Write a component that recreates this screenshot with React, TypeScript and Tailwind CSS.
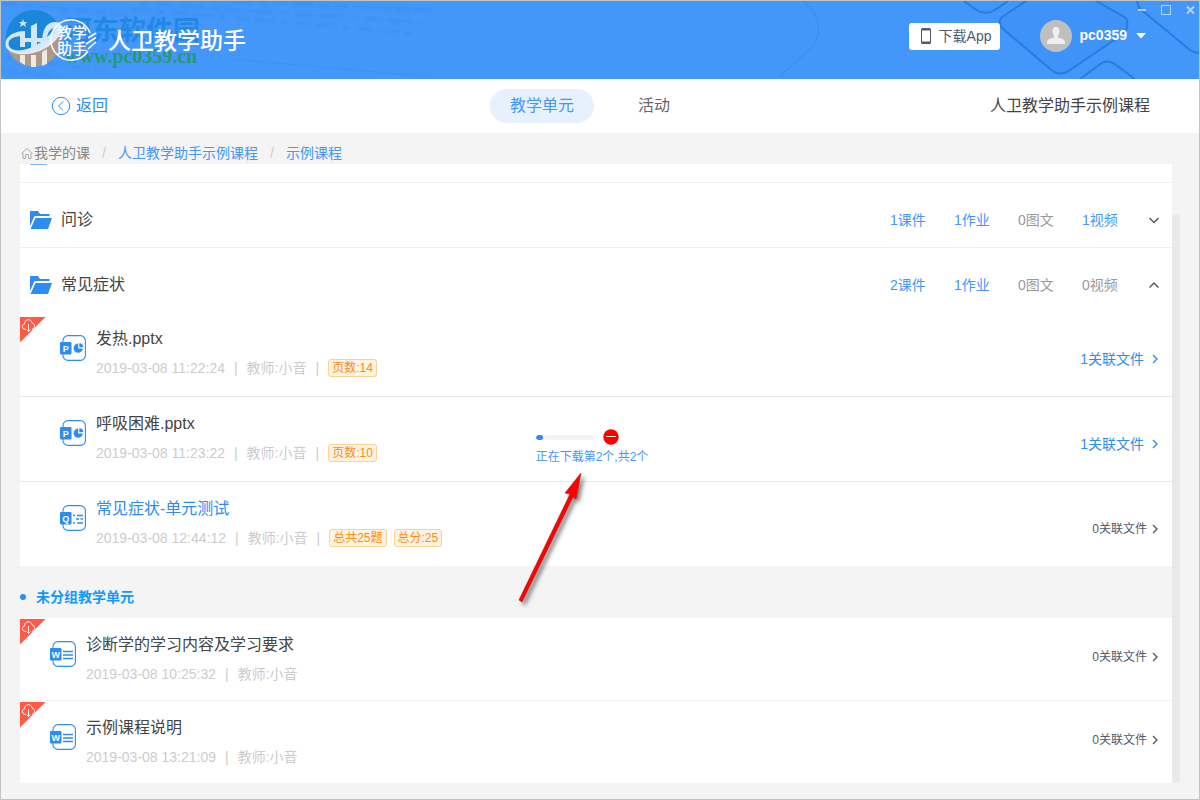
import type { ReactNode } from "react";

type UnitFile = {
  title: string;
  date: string;
  kind: "P" | "Q" | "W";
  related: number;
  tags?: string[];
  pending?: boolean;
  highlight?: boolean;
  downloading?: boolean;
};

type Folder = {
  name: string;
  counts: [number, string][];
  open: boolean;
};

const folders: Folder[] = [
  {
    name: "问诊",
    counts: [
      [1, "课件"],
      [1, "作业"],
      [0, "图文"],
      [1, "视频"],
    ],
    open: false,
  },
  {
    name: "常见症状",
    counts: [
      [2, "课件"],
      [1, "作业"],
      [0, "图文"],
      [0, "视频"],
    ],
    open: true,
  },
];

const groupedFiles: UnitFile[] = [
  {
    title: "发热.pptx",
    date: "2019-03-08 11:22:24",
    kind: "P",
    related: 1,
    tags: ["页数:14"],
    pending: true,
  },
  {
    title: "呼吸困难.pptx",
    date: "2019-03-08 11:23:22",
    kind: "P",
    related: 1,
    tags: ["页数:10"],
    downloading: true,
  },
  {
    title: "常见症状-单元测试",
    date: "2019-03-08 12:44:12",
    kind: "Q",
    related: 0,
    tags: ["总共25题", "总分:25"],
    highlight: true,
  },
];

const ungroupedFiles: UnitFile[] = [
  {
    title: "诊断学的学习内容及学习要求",
    date: "2019-03-08 10:25:32",
    kind: "W",
    related: 0,
    pending: true,
  },
  {
    title: "示例课程说明",
    date: "2019-03-08 13:21:09",
    kind: "W",
    related: 0,
    pending: true,
  },
];

function HeaderBackdrop() {
  return (
    <>
      <svg
        className="absolute left-0 top-0"
        width="500"
        height="78"
        fill="none"
        stroke="#2f7fe0"
        strokeWidth="3"
        opacity="0.22"
        aria-hidden="true"
      >
        <g className="blur-[1px]">
          <path d="M150 -4 430 9" strokeDasharray="14 5 22 6 9 5" />
          <path d="M140 2 422 22" strokeDasharray="8 6 18 5 26 7" />
          <path d="M130 8 420 33" strokeDasharray="20 7 6 9 14 6" />
          <path d="M0 2 130 14" strokeDasharray="16 5 10 6" />
          <path d="M0 42 90 54" strokeDasharray="20 5 12 6" />
          <path d="M0 56 110 70" strokeDasharray="12 5 24 6" />
          <path d="M0 69 60 76" strokeDasharray="16 5 9 5" />
        </g>
        <path d="M230 58 430 76" strokeWidth="1" />
      </svg>
      <svg
        className="absolute right-0 top-0"
        width="420"
        height="78"
        viewBox="0 0 420 78"
        fill="none"
        stroke="#1f72d8"
        strokeWidth="2"
        opacity="0.75"
        aria-hidden="true"
      >
        <path d="M24 0C42 15 44 35 32 47L-2 78" strokeWidth="1" opacity="0.4" />
        <path d="M185 0 196 8Q206 15 216 9L229 0" />
        <path
          d="M247 0 223 16Q218 21 223 27L270 67Q280 77 291 69L344 33Q351 26 347 17L317 0"
          fill="#3a8df3"
          fillOpacity="0.45"
        />
        <path d="M301 78 320 64Q328 57 337 64L356 78" />
        <path d="M358 0Q359 7 365 11L411 49Q415 52 420 52" />
      </svg>
    </>
  );
}

function AppLogo() {
  return (
    <svg width="50" height="44" viewBox="0 0 50 44" aria-hidden="true">
      <g fill="none" stroke="#fff" strokeWidth="1.5">
        <path d="M40 15A20.200 20.200 0 1 0 38 33" />
        <path d="M38 20 46 15M36 26 46 19.500M38 31 46 24" />
      </g>
      <g
        fill="#fff"
        fontSize="15"
        fontWeight="500"
        fontFamily="Noto Sans CJK SC, sans-serif"
      >
        <text x="7" y="20">
          教学
        </text>
        <text x="7" y="36">
          助手
        </text>
      </g>
    </svg>
  );
}

function Watermark() {
  return (
    <div className="pointer-events-none absolute left-1 top-2 flex">
      <svg width="60" height="60" viewBox="0 0 60 60" aria-hidden="true">
        <path
          d="M1 32A28 28 0 0 1 55 19C46 32 30 42 14 42 8 42 2 38 1 32Z"
          fill="#1585d6"
          opacity="0.9"
        />
        <path
          d="M3 41C14 48 36 46 56 24A28 28 0 0 1 3 41Z"
          fill="#c09a70"
          opacity="0.85"
        />
        <g fill="#fff" opacity="0.8">
          <path d="M1 38C-2 28 9 22 20 22V38H15V27C7 28 2 31 4 37 8 46 34 42 51 18 43 20 42 26 42 32L37 35C37 20 42 10 55 14 58 20 55 26 51 31 36 47 8 50 1 38Z" />
          <path d="M26 17 32 14V38L26 40V33H20V29H26ZM32 29H38V33H32Z" />
          <path d="M15 46h5v10l-5-3ZM26 46h5v12h-5ZM37 43l5-3v15l-5 2Z" />
          <path d="m18 10 1 3h3l-2 2 1 3-3-2-3 2 1-3-2-2h3z" />
        </g>
      </svg>
      <div className="whitespace-nowrap">
        <p className="mt-1 font-['Noto_Sans_CJK_SC',sans-serif] text-[27px] font-bold leading-8 text-[#0e7fd8]/60">
          河东软件园
        </p>
        <p className="-mt-px font-['Liberation_Serif',serif] text-[20px] font-bold leading-6 text-[#1f9a4c]/80">
          www.pc0359.cn
        </p>
      </div>
    </div>
  );
}

function Chevron({ dir }: { dir: "up" | "down" | "right" }) {
  if (dir === "right") {
    return (
      <svg width="6" height="10" viewBox="0 0 6 10" fill="none" aria-hidden="true">
        <path d="m1 1 4 4-4 4" stroke="currentColor" strokeWidth="1.4" />
      </svg>
    );
  }
  return (
    <svg width="10" height="8" viewBox="0 0 10 8" fill="none" aria-hidden="true">
      <path
        d={dir === "up" ? "m0.5 6.500 4.500-4.500 4.500 4.500" : "m0.500 2 4.500 4.500L9.500 2"}
        stroke="currentColor"
        strokeWidth="1.5"
      />
    </svg>
  );
}

function FolderIcon() {
  return (
    <svg width="22" height="18" viewBox="0 0 22 18" aria-hidden="true">
      <path d="M0 0H8L10 3H19.500V5H4.500L0 15Z" fill="#2d8cf0" />
      <path d="M5.500 7H22L18 18H0.500Z" fill="#2d8cf0" />
    </svg>
  );
}

function FileIcon({ kind }: { kind: UnitFile["kind"] }) {
  return (
    <svg width="26" height="26" viewBox="0 0 26 26" aria-hidden="true">
      <rect
        x="3"
        y="0.6"
        width="22.400"
        height="24.800"
        rx="5"
        fill="#fff"
        stroke="#2d8cf0"
        strokeWidth="1.1"
      />
      <rect y="7" width="11.500" height="12.500" rx="1" fill="#2d8cf0" />
      <text
        x="5.700"
        y="16.500"
        fill="#fff"
        fontSize="9"
        fontWeight="700"
        textAnchor="middle"
        fontFamily="Liberation Sans, sans-serif"
      >
        {kind}
      </text>
      {kind === "P" && (
        <>
          <path d="M18.200 8.600A4.600 4.600 0 1 0 22.800 13.400H18.200Z" fill="#2d8cf0" />
          <path d="M19.300 8.200V12.300H23.200A4 4 0 0 0 19.300 8.200Z" fill="#2d8cf0" />
        </>
      )}
      {kind === "Q" && (
        <path
          d="M13 10.500h2M17 10.500h6M16 14h3M20.500 14h2.500M13 18h2M17 18h6"
          stroke="#2d8cf0"
          strokeWidth="1.500"
        />
      )}
      {kind === "W" && (
        <path
          d="M13 10.500H23M13 14H23M13 17.500H23"
          stroke="#2d8cf0"
          strokeWidth="1.300"
        />
      )}
    </svg>
  );
}

// 左上角未下载标记
function PendingCorner() {
  return (
    <svg width="26" height="26" viewBox="0 0 26 26" fill="none" aria-hidden="true">
      <path d="M0 0H25.500L0 25.500Z" fill="#ff5a48" />
      <path
        d="M6 12.500C1.500 12.500 1 7.500 4.500 7 4.500 1.500 11.500 1.500 12 6 15.500 6.500 15.500 11 12 12.500M8.500 7V14.500M6.500 12.500l2 2 2-2"
        stroke="#fff"
        strokeWidth="0.900"
      />
    </svg>
  );
}

function DownloadProgress() {
  return (
    <div className="mr-2 pt-8 text-xs text-[#4396fa]">
      <div className="flex items-center gap-[9px]">
        <div className="h-[5px] w-[58px] overflow-hidden rounded-full bg-[#f3f3f3]">
          <div className="h-full rounded-full bg-[#2d8cf0]" style={{ width: "12%" }} />
        </div>
        <button aria-label="取消下载">
          <svg width="16" height="16" viewBox="0 0 16 16" className="block">
            <circle cx="8" cy="8" r="7.700" fill="#f00" />
            <path d="M3 7.500H13" stroke="#fff" />
          </svg>
        </button>
      </div>
      <p className="mt-1 whitespace-nowrap leading-4">正在下载第2个,共2个</p>
    </div>
  );
}

function FileRow({ file, nested }: { file: UnitFile; nested?: boolean }) {
  const linked = file.related > 0;
  return (
    <li
      className={
        nested
          ? "relative grid grid-cols-[1fr_auto_1fr] border-b border-[#e8e8e8] pb-4 last:border-b-0"
          : "relative grid grid-cols-[1fr_auto_1fr] border-b border-[#f1f1f1] pb-[14px] last:border-b-0"
      }
    >
      {file.pending && (
        <div className={nested ? "absolute left-0 top-[5px]" : "absolute left-0 top-px"}>
          <PendingCorner />
        </div>
      )}
      <div className={nested ? "flex gap-[10px] pl-10" : "flex gap-[10px] pl-[30px]"}>
        <div className="pt-[23px]">
          <FileIcon kind={file.kind} />
        </div>
        <div className="pt-[15px]">
          <h3
            className={
              file.highlight
                ? "text-base leading-6 text-[#2d8cf0]"
                : "text-base leading-6 text-[#444]"
            }
          >
            {file.title}
          </h3>
          <div className="mt-[5px] flex items-center gap-[9px] whitespace-nowrap text-sm leading-6 text-[#ccc]">
            <span>{file.date}</span>
            <span>|</span>
            <span>教师:小音</span>
            {file.tags && (
              <>
                <span>|</span>
                <div className="flex gap-[7px]">
                  {file.tags.map((tag) => (
                    <span
                      key={tag}
                      className="rounded-[3px] border border-[#ffd18c] bg-[#fff4e2] px-[3px] text-xs leading-4 text-[#ff8a12]"
                    >
                      {tag}
                    </span>
                  ))}
                </div>
              </>
            )}
          </div>
        </div>
      </div>
      <div>{file.downloading && <DownloadProgress />}</div>
      <div
        className={
          nested
            ? "flex items-center justify-end pr-[14px] pt-[25px]"
            : "flex items-center justify-end pr-[14px] pt-[10px]"
        }
      >
        <a
          href="#related"
          className={
            linked
              ? "flex items-center gap-2 text-sm text-[#2d8cf0]"
              : "flex items-center gap-[5px] text-xs text-[#515a6e]"
          }
        >
          {file.related}关联文件
          <Chevron dir="right" />
        </a>
      </div>
    </li>
  );
}

function FolderRow({ folder }: { folder: Folder }) {
  return (
    <div
      className={
        folder.open
          ? "flex h-16 items-center justify-between pl-[10px] pr-[13px] pt-[10px]"
          : "flex h-[65px] items-center justify-between border-b border-[#f1f1f1] pl-[10px] pr-[13px] pt-[10px]"
      }
    >
      <div className="flex items-center gap-[9px]">
        <FolderIcon />
        <h2 className="text-base text-[#444]">{folder.name}</h2>
      </div>
      <div className="flex items-center gap-7 whitespace-nowrap text-sm">
        {folder.counts.map(([count, label]) => (
          <span
            key={label}
            className={count > 0 ? "min-w-9 text-[#4396fa]" : "min-w-9 text-[#999]"}
          >
            {count}
            {label}
          </span>
        ))}
        <button
          aria-label={folder.open ? "收起" : "展开"}
          className="ml-[3px] text-[#515a6e]"
        >
          <Chevron dir={folder.open ? "up" : "down"} />
        </button>
      </div>
    </div>
  );
}

function Crumb({ children }: { children: ReactNode }) {
  return (
    <>
      <span className="w-7 text-center text-[#ccc]">/</span>
      <a href="#course" className="text-[#4396fa]">
        {children}
      </a>
    </>
  );
}

export default function App() {
  return (
    <div className="relative flex min-h-screen flex-col border border-[#c3c3c3] bg-[#f4f4f4] font-['Liberation_Sans','Noto_Sans_CJK_SC',sans-serif]">
      <header className="relative flex h-[78px] items-center justify-between overflow-hidden bg-[#4396fa] pl-[49px] pr-[52px]">
        <HeaderBackdrop />
        <Watermark />
        <div className="relative flex items-center gap-2">
          <AppLogo />
          <h1 className="pt-[3px] text-[23px] font-medium text-white">人卫教学助手</h1>
        </div>
        <div className="relative flex items-center pb-2">
          <button className="flex h-[27px] items-center gap-2 rounded-[3px] bg-white pl-3 pr-2 text-sm text-[#515a6e]">
            <svg width="10" height="16" viewBox="0 0 10 16" aria-hidden="true">
              <path
                d="M1.500 0h7A1.500 1.500 0 0 1 10 1.500v13A1.500 1.500 0 0 1 8.500 16h-7A1.500 1.500 0 0 1 0 14.500v-13A1.500 1.500 0 0 1 1.500 0ZM1 2.500v11h8v-11Z"
                fill="currentColor"
                fillRule="evenodd"
              />
            </svg>
            下载App
          </button>
          <button className="ml-10 flex items-center gap-2 text-sm font-bold text-white">
            <svg width="32" height="32" viewBox="0 0 32 32" aria-hidden="true">
              <circle cx="16" cy="16" r="16" fill="#bfbfbf" />
              <path
                d="M16 7c2.500 0 4 2 3.500 5-.2 1.500-.8 2.500-1.500 3.500v2c2.500 1 7 1.500 7 4.500v2H7v-2c0-3 4.500-3.500 7-4.500v-2c-.7-1-1.300-2-1.500-3.500C12 9 13.500 7 16 7Z"
                fill="#eee"
              />
            </svg>
            <span className="pb-[3px]">pc0359</span>
            <svg width="12" height="6" viewBox="0 0 12 6" aria-hidden="true">
              <path d="M1 0H11L6 5.500Z" fill="#fff" />
            </svg>
          </button>
        </div>
        <div className="absolute right-1 top-1 flex items-center gap-[14px] text-white/60">
          <button aria-label="最小化">
            <svg width="9" height="10" className="block">
              <path d="M0 5H8" stroke="currentColor" strokeWidth="2" />
            </svg>
          </button>
          <button aria-label="最大化">
            <svg width="11" height="10" className="block" fill="none">
              <rect x="0.5" y="0.5" width="9" height="9" stroke="currentColor" />
            </svg>
          </button>
          <button aria-label="关闭">
            <svg width="9" height="10" className="block">
              <path d="m1 1.500 7 7m0-7-7 7" stroke="currentColor" strokeWidth="2" />
            </svg>
          </button>
        </div>
      </header>

      <nav className="grid h-[54px] grid-cols-[1fr_auto_1fr] items-center bg-white px-[49px]">
        <a href="#back" className="flex items-center gap-[5px] pl-px text-base text-[#2d8cf0]">
          <svg width="20" height="20" viewBox="0 0 20 20" fill="none" aria-hidden="true">
            <circle cx="10" cy="10" r="8.700" stroke="currentColor" />
            <path d="M12 5.500 7.500 10l4.500 4.500" stroke="currentColor" />
          </svg>
          返回
        </a>
        <div className="mr-5 flex gap-6 text-base">
          <button className="h-[34px] rounded-full bg-[#e7f1fe] px-5 text-[#4396fa]">
            教学单元
          </button>
          <button className="h-[34px] rounded-full px-5 text-[#666]">活动</button>
        </div>
        <p className="text-right text-base text-[#444]">人卫教学助手示例课程</p>
      </nav>

      <div className="flex h-[31px] items-center px-5 pt-[9px] text-sm">
        <svg
          width="13"
          height="12"
          viewBox="0 0 13 12"
          fill="none"
          stroke="#aaa"
          aria-hidden="true"
        >
          <path d="M0.500 6.500 6 1.500l5.500 5M2 6v5.500h2.500v-4h3v4H10V6" />
        </svg>
        <a href="#courses" className="text-[#888]">
          我学的课
        </a>
        <Crumb>人卫教学助手示例课程</Crumb>
        <Crumb>示例课程</Crumb>
      </div>

      <main className="flex flex-1 pb-4 pl-[19px] pr-[19px]">
        <div className="flex-1">
          <section className="bg-white">
            <div className="h-[19px] border-b border-[#f1f1f1] pl-[10px]">
              <div className="h-px w-[17px] bg-[#7db8f8]" />
            </div>
            {folders.map((folder) => (
              <FolderRow key={folder.name} folder={folder} />
            ))}
            <ul>
              {groupedFiles.map((file) => (
                <FileRow key={file.title} file={file} nested />
              ))}
            </ul>
          </section>

          <div className="flex h-[52px] items-center gap-[10px] pt-[10px]">
            <span className="h-[6px] w-[6px] rounded-full bg-[#2d8cf0]" />
            <h2 className="text-sm font-bold text-[#0d9bff]">未分组教学单元</h2>
          </div>

          <ul className="bg-white">
            {ungroupedFiles.map((file) => (
              <FileRow key={file.title} file={file} />
            ))}
          </ul>
        </div>
        <div className="mt-[50px] w-2 rounded-full bg-[#e9e9e9]" />
      </main>

      {/* 指向下载进度的红色箭头 */}
      <svg
        className="pointer-events-none absolute left-[509px] top-[464px]"
        width="90"
        height="150"
        viewBox="510 465 90 150"
        aria-hidden="true"
      >
        <g className="drop-shadow-[3px_3px_2px_rgba(0,0,0,0.5)]">
          <path
            d="M581 473 565 493 570 494 519 600 522 602 573 497 576 499Z"
            fill="#f00"
            stroke="#c01010"
            strokeWidth="0.600"
          />
        </g>
      </svg>
    </div>
  );
}
